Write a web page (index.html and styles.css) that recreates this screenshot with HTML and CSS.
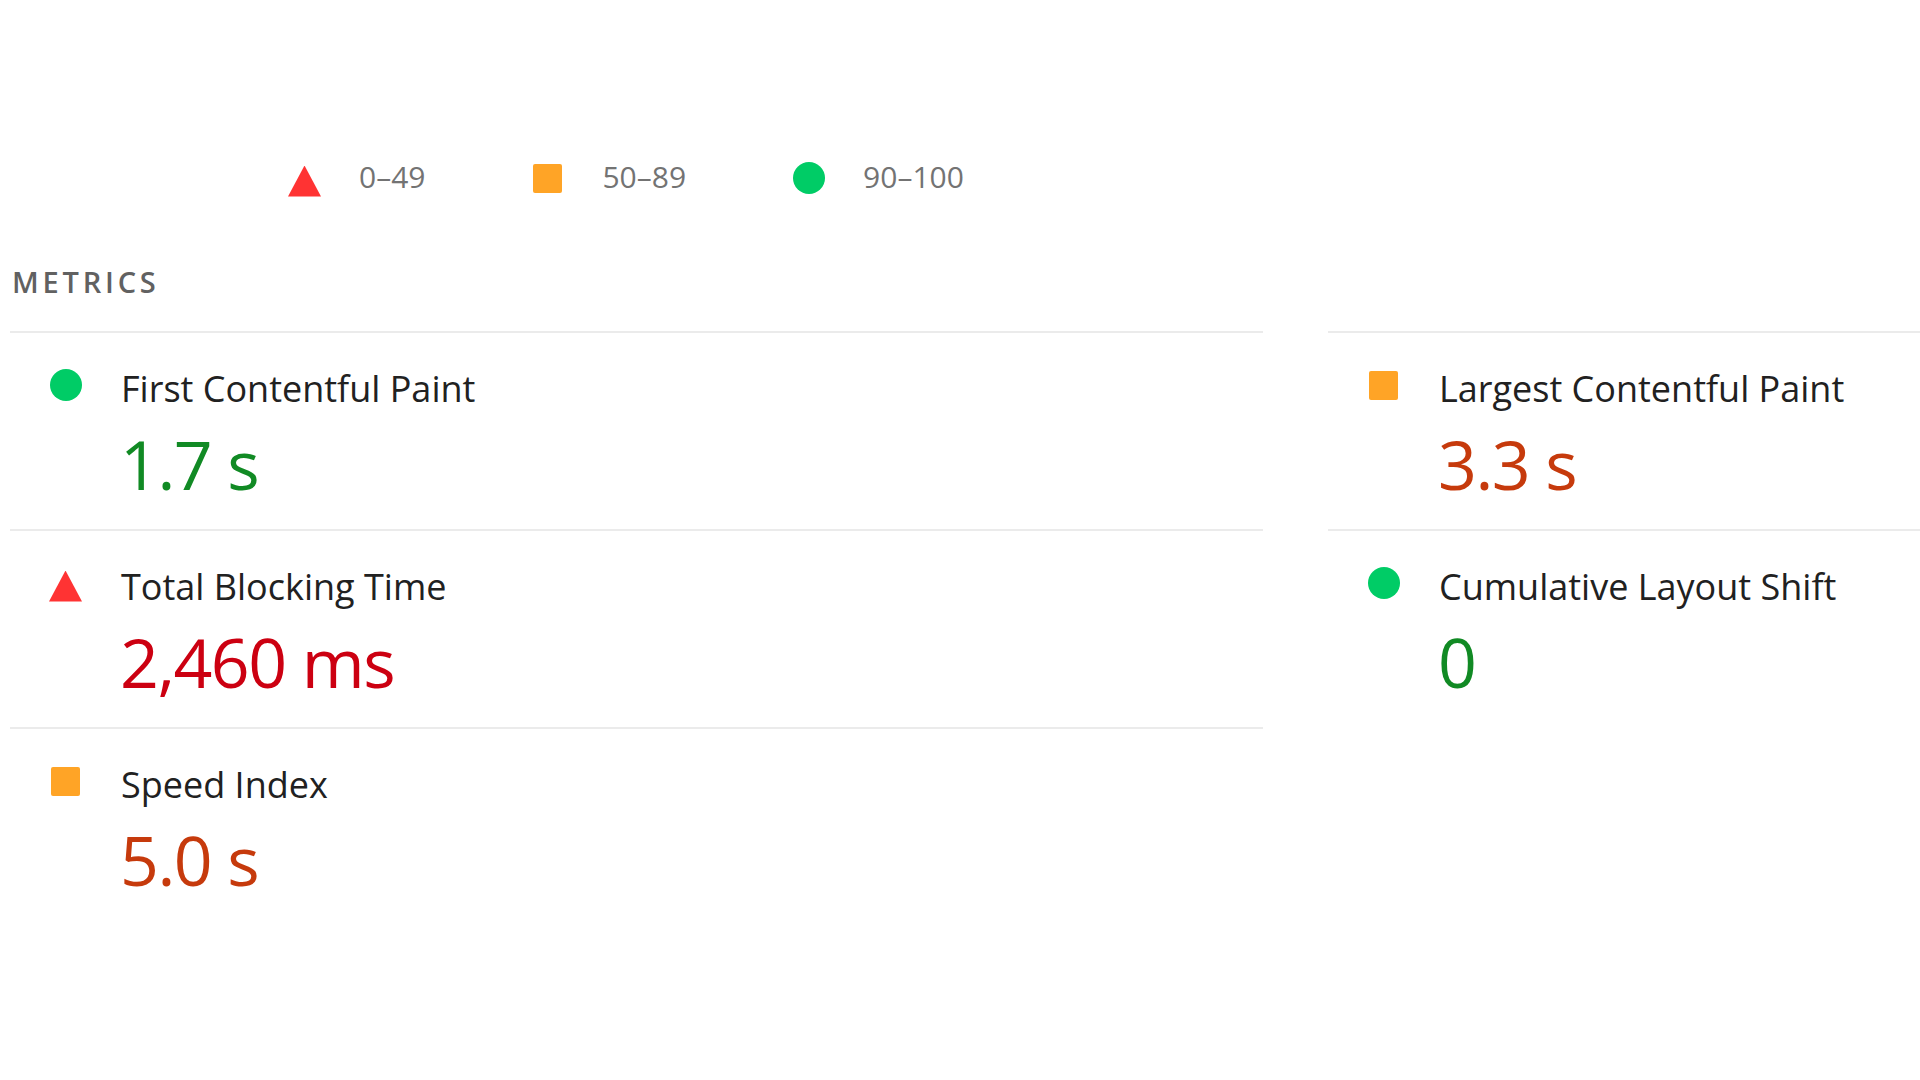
FILE: index.html
```html
<!DOCTYPE html>
<html lang="en">
<head>
  <meta charset="UTF-8">
  <title>Metrics</title>
  <link rel="stylesheet" href="styles.css">
</head>
<body>
  <div class="report">
    <div class="legend">
      <span class="legend-item">
        <span class="icon"><span class="shape fail"></span></span>
        <span class="legend-text">0–49</span>
      </span>
      <span class="legend-item">
        <span class="icon"><span class="shape average"></span></span>
        <span class="legend-text">50–89</span>
      </span>
      <span class="legend-item">
        <span class="icon"><span class="shape pass"></span></span>
        <span class="legend-text">90–100</span>
      </span>
    </div>

    <div class="section-title">Metrics</div>

    <div class="metrics">
      <div class="metric">
        <div class="metric-head">
          <span class="icon"><span class="shape pass"></span></span>
          <span class="metric-title">First Contentful Paint</span>
        </div>
        <div class="metric-value pass-text">1.7&nbsp;s</div>
      </div>
      <div class="metric">
        <div class="metric-head">
          <span class="icon"><span class="shape average"></span></span>
          <span class="metric-title">Largest Contentful Paint</span>
        </div>
        <div class="metric-value average-text">3.3&nbsp;s</div>
      </div>
      <div class="metric">
        <div class="metric-head">
          <span class="icon"><span class="shape fail"></span></span>
          <span class="metric-title">Total Blocking Time</span>
        </div>
        <div class="metric-value fail-text">2,460&nbsp;ms</div>
      </div>
      <div class="metric">
        <div class="metric-head">
          <span class="icon"><span class="shape pass"></span></span>
          <span class="metric-title">Cumulative Layout Shift</span>
        </div>
        <div class="metric-value pass-text">0</div>
      </div>
      <div class="metric">
        <div class="metric-head">
          <span class="icon"><span class="shape average"></span></span>
          <span class="metric-title">Speed Index</span>
        </div>
        <div class="metric-value average-text">5.0&nbsp;s</div>
      </div>
    </div>
  </div>
</body>
</html>
```

FILE: styles.css
```css
:root {
  --pass: #00cc66;
  --average: #ffa426;
  --fail: #ff3333;
  --pass-text: #118a24;
  --average-text: #c63a0c;
  --fail-text: #cc0011;
  --divider: #ebebeb;
}
html, body {
  margin: 0;
  padding: 0;
  background: #fff;
  overflow: hidden;
}
body {
  font-family: 'Open Sans', 'Noto Sans', sans-serif;
  color: #212121;
  width: 1920px;
  height: 1080px;
}
.report {
  padding-top: 157px;
}
.legend {
  display: flex;
  gap: 106px;
  padding-left: 288px;
  height: 40px;
  line-height: 40px;
  font-size: 30px;
}
.legend-item {
  display: flex;
  align-items: center;
  gap: 38px;
}
.legend-text {
  color: #737373;
}
.legend .icon {
  margin-top: 2px;
}
.section-title {
  margin: 65px 0 29px 12px;
  font-size: 29px;
  line-height: 40px;
  font-weight: 600;
  letter-spacing: 3.8px;
  text-transform: uppercase;
  color: #616161;
}
.metrics {
  display: grid;
  grid-template-columns: 1253px 1253px;
  column-gap: 65px;
  margin-left: 10px;
}
.metric {
  border-top: 2px solid var(--divider);
  padding: 33px 0 25px 39px;
}
.metric-head {
  display: flex;
  align-items: flex-start;
  gap: 39px;
  height: 46px;
}
.metric-head .icon {
  margin-top: 3px;
}
.metric-title {
  font-size: 36px;
  line-height: 46px;
}
.metric-value {
  margin-top: 12px;
  padding-left: 71px;
  font-size: 68px;
  line-height: 80px;
  letter-spacing: -1.5px;
}
.icon {
  width: 33px;
  height: 32px;
  display: flex;
  align-items: center;
  justify-content: center;
  flex: none;
}
.shape.pass {
  width: 32px;
  height: 32px;
  border-radius: 50%;
  background: var(--pass);
}
.shape.average {
  width: 29px;
  height: 29px;
  border-radius: 2px;
  background: var(--average);
}
.shape.fail {
  width: 33px;
  height: 31px;
  margin-top: 6px;
  background: var(--fail);
  clip-path: polygon(50% 0, 100% 100%, 0 100%);
}
.pass-text {
  color: var(--pass-text);
}
.average-text {
  color: var(--average-text);
}
.fail-text {
  color: var(--fail-text);
}
```
